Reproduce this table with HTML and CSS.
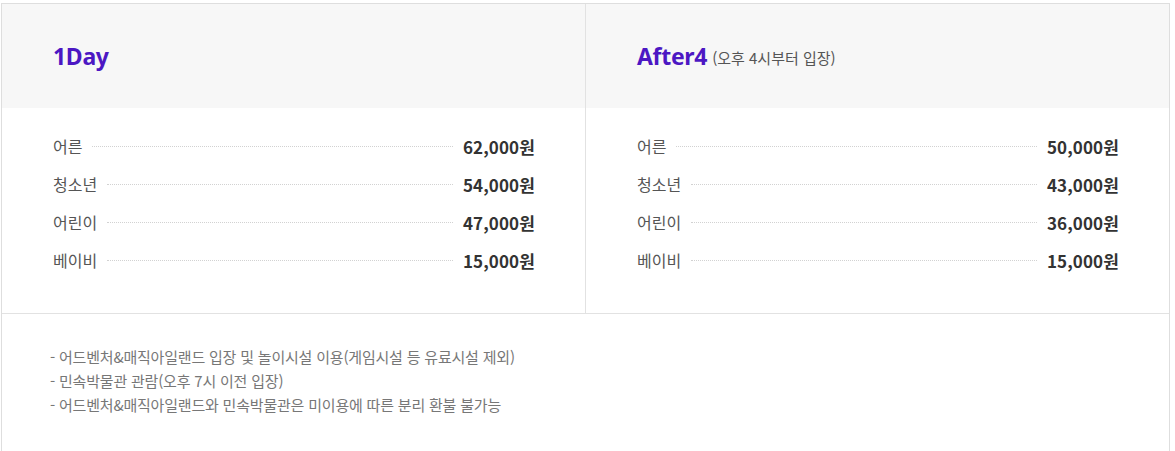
FILE: index.html
```html
<!DOCTYPE html>
<html lang="ko">
<head>
<meta charset="utf-8">
<link rel="stylesheet" href="styles.css">
</head>
<body>
<div class="box">
  <div class="cols">
    <section class="col">
      <div class="head"><h2 class="title">1Day</h2></div>
      <ul class="rows">
        <li class="row"><span class="lbl">어른</span><span class="dots"></span><span class="price">62,000원</span></li>
        <li class="row"><span class="lbl">청소년</span><span class="dots"></span><span class="price">54,000원</span></li>
        <li class="row"><span class="lbl">어린이</span><span class="dots"></span><span class="price">47,000원</span></li>
        <li class="row"><span class="lbl">베이비</span><span class="dots"></span><span class="price">15,000원</span></li>
      </ul>
    </section>
    <section class="col">
      <div class="head"><h2 class="title">After4</h2><span class="sub">(오후 4시부터 입장)</span></div>
      <ul class="rows">
        <li class="row"><span class="lbl">어른</span><span class="dots"></span><span class="price">50,000원</span></li>
        <li class="row"><span class="lbl">청소년</span><span class="dots"></span><span class="price">43,000원</span></li>
        <li class="row"><span class="lbl">어린이</span><span class="dots"></span><span class="price">36,000원</span></li>
        <li class="row"><span class="lbl">베이비</span><span class="dots"></span><span class="price">15,000원</span></li>
      </ul>
    </section>
  </div>
  <ul class="notes">
    <li>- 어드벤처&amp;매직아일랜드 입장 및 놀이시설 이용(게임시설 등 유료시설 제외)</li>
    <li>- 민속박물관 관람(오후 7시 이전 입장)</li>
    <li>- 어드벤처&amp;매직아일랜드와 민속박물관은 미이용에 따른 분리 환불 불가능</li>
  </ul>
</div>
</body>
</html>
```

FILE: styles.css
```css
* { box-sizing: border-box; }
html, body { margin: 0; padding: 0; background: #fff; }
body {
  padding: 3px 0 0 1px;
  font-family: "Noto Sans CJK KR", "Noto Sans", sans-serif;
  color: #555;
}
ul { list-style: none; margin: 0; padding: 0; }
.box {
  width: 1169px;
  height: 460px;
  border: 1px solid #dedede;
}
.cols {
  display: grid;
  grid-template-columns: 584px 1fr;
  border-bottom: 1px solid #e2e2e2;
}
.col:first-child { border-right: 1px solid #e2e2e2; }
.head {
  height: 104px;
  background: #f7f7f7;
  display: flex;
  align-items: center;
  gap: 5px;
  padding: 0 51px;
}
.title {
  margin: 0;
  font-family: "Noto Sans", sans-serif;
  font-size: 23px;
  font-weight: 700;
  color: #4c17c3;
  letter-spacing: -0.3px;
  line-height: 1;
}
.sub {
  font-size: 15px;
  color: #555;
  letter-spacing: 0;
  padding-top: 3px;
}
.rows { padding: 19px 50px 34px 51px; }
.row {
  display: flex;
  align-items: center;
  height: 38px;
}
.lbl {
  font-size: 16px;
  color: #555;
  letter-spacing: 0;
}
.dots {
  flex: 1;
  border-top: 1px dotted #d2d2d2;
  margin: 1px 10px 0 10px;
}
.price {
  font-size: 17px;
  font-weight: 700;
  color: #333;
  letter-spacing: 0.1px;
}
.notes {
  padding: 31px 48px;
  font-size: 15px;
  line-height: 24px;
  color: #777;
  letter-spacing: -0.2px;
}
```
